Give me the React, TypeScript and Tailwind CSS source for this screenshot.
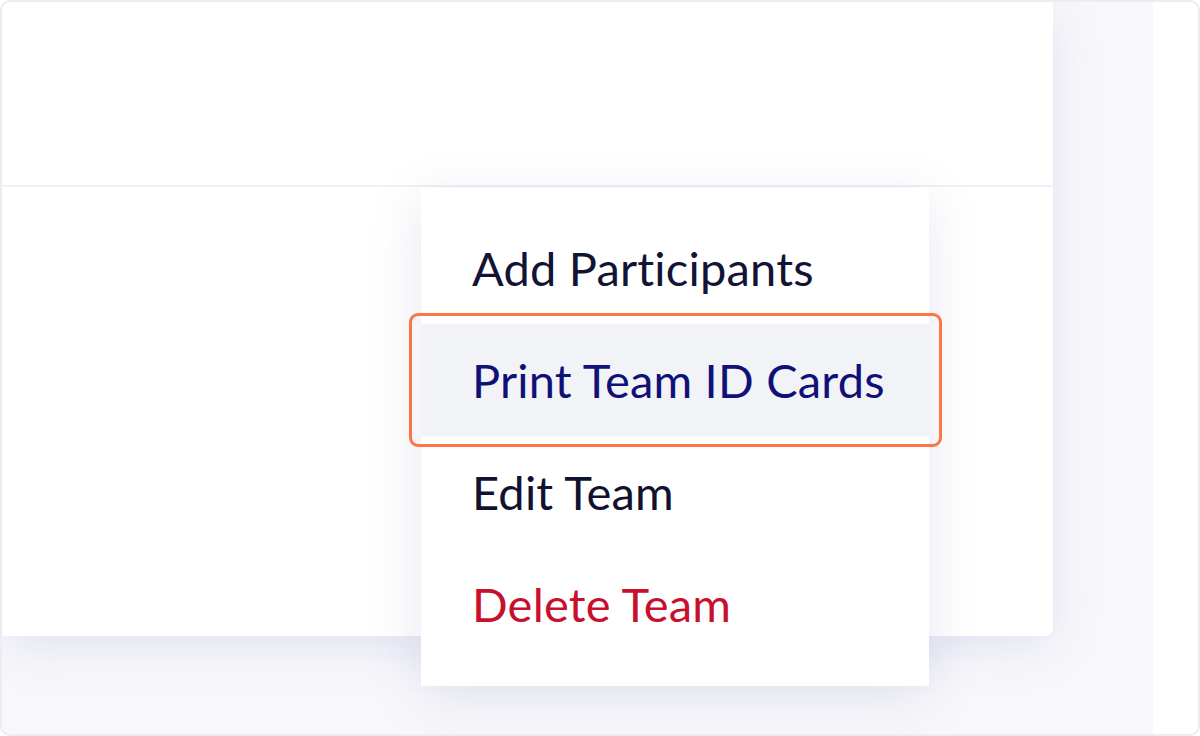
import React from "react";

const items = [
  { label: "Add Participants", color: "text-[#121435]", active: false },
  { label: "Print Team ID Cards", color: "text-[#101178]", active: true },
  { label: "Edit Team", color: "text-[#101230]", active: false },
  { label: "Delete Team", color: "text-[#c8102e]", active: false },
];

function TeamMenu() {
  return (
    <div className="absolute left-[419px] top-[186px] w-[508px] bg-white pt-[24px] pb-[26px] shadow-[0_12px_50px_rgba(90,95,160,0.14)]">
      {items.map((item) => (
        <div
          key={item.label}
          className={`relative flex h-[112px] items-center pl-[51px] ${
            item.active ? "bg-[#f2f3f6]" : ""
          }`}
        >
          <span className={`text-[47px] leading-none tracking-[0.2px] ${item.color}`}>
            {item.label}
          </span>
          {item.active && (
            <div className="pointer-events-none absolute -left-[12px] -right-[13px] -top-[11px] -bottom-[11px] rounded-[9px] border-[3px] border-[#ff7446]" />
          )}
        </div>
      ))}
    </div>
  );
}

export default function App() {
  return (
    <div
      className="h-[736px] w-[1200px] overflow-hidden bg-white"
      style={{ fontFamily: "Lato, 'Open Sans', sans-serif" }}
    >
      <div className="flex h-full overflow-hidden rounded-[10px] border-2 border-[#ececf1]">
        <div className="relative w-[1151px] bg-[#f8f8fb]">
          <div className="flex h-[634px] w-[1051px] flex-col rounded-br-[8px] bg-white shadow-[0_10px_50px_rgba(110,115,190,0.16)]">
            <div className="h-[183px]" />
            <div className="h-[2px] bg-[#f0f0f5]" />
            <div className="flex-1" />
          </div>
          <TeamMenu />
        </div>
        <div className="flex-1 bg-white" />
      </div>
    </div>
  );
}
